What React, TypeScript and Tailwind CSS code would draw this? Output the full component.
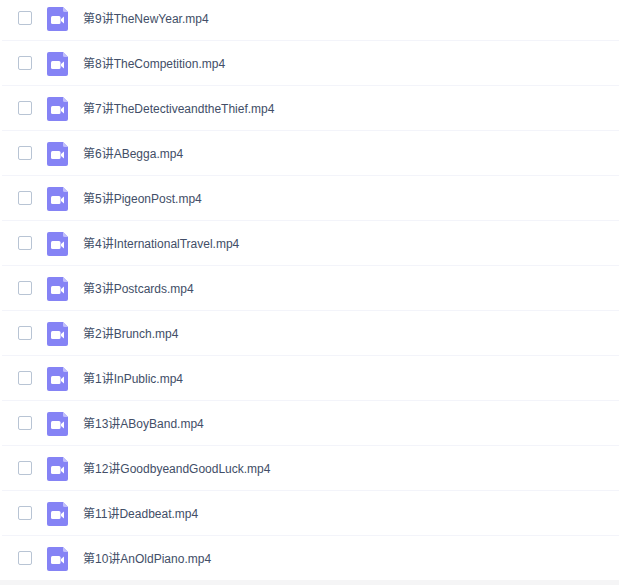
const files = [
  "第9讲TheNewYear.mp4",
  "第8讲TheCompetition.mp4",
  "第7讲TheDetectiveandtheThief.mp4",
  "第6讲ABegga.mp4",
  "第5讲PigeonPost.mp4",
  "第4讲InternationalTravel.mp4",
  "第3讲Postcards.mp4",
  "第2讲Brunch.mp4",
  "第1讲InPublic.mp4",
  "第13讲ABoyBand.mp4",
  "第12讲GoodbyeandGoodLuck.mp4",
  "第11讲Deadbeat.mp4",
  "第10讲AnOldPiano.mp4",
]

const VideoIcon = () => (
  <svg width="21" height="24" viewBox="0 0 21 24" className="block shrink-0">
    <path d="M2 0H16L21 5V22a2 2 0 0 1-2 2H2a2 2 0 0 1-2-2V2a2 2 0 0 1 2-2Z" fill="#8583f5" />
    <path d="M16 0L21 5H17.5A1.5 1.5 0 0 1 16 3.5Z" fill="#c0bffb" />
    <rect x="4" y="9" width="9.5" height="8" rx="1.5" fill="#fff" />
    <path d="M14 12L17 9.5V16.5L14 14Z" fill="#fff" />
  </svg>
)

export default function App() {
  return (
    <div className="h-[585px] w-[619px] overflow-hidden bg-[#f5f5f6]">
      <ul className="-mt-[4px] bg-white pl-[2px]">
        {files.map((name) => (
          <li key={name} className="flex h-[45px] items-center border-b border-[#f3f4fa] pl-4 last:h-[44px] last:border-b-0">
            <span className="h-[14px] w-[14px] shrink-0 rounded-[2px] border border-[#b8c4d4] bg-white" />
            <span className="ml-[15px] mt-[2px]"><VideoIcon /></span>
            <span className="ml-[15px] mt-[2px] font-['Liberation_Sans','Noto_Sans_CJK_SC',sans-serif] text-[12px] text-[#424e67]">{name}</span>
          </li>
        ))}
      </ul>
    </div>
  )
}
